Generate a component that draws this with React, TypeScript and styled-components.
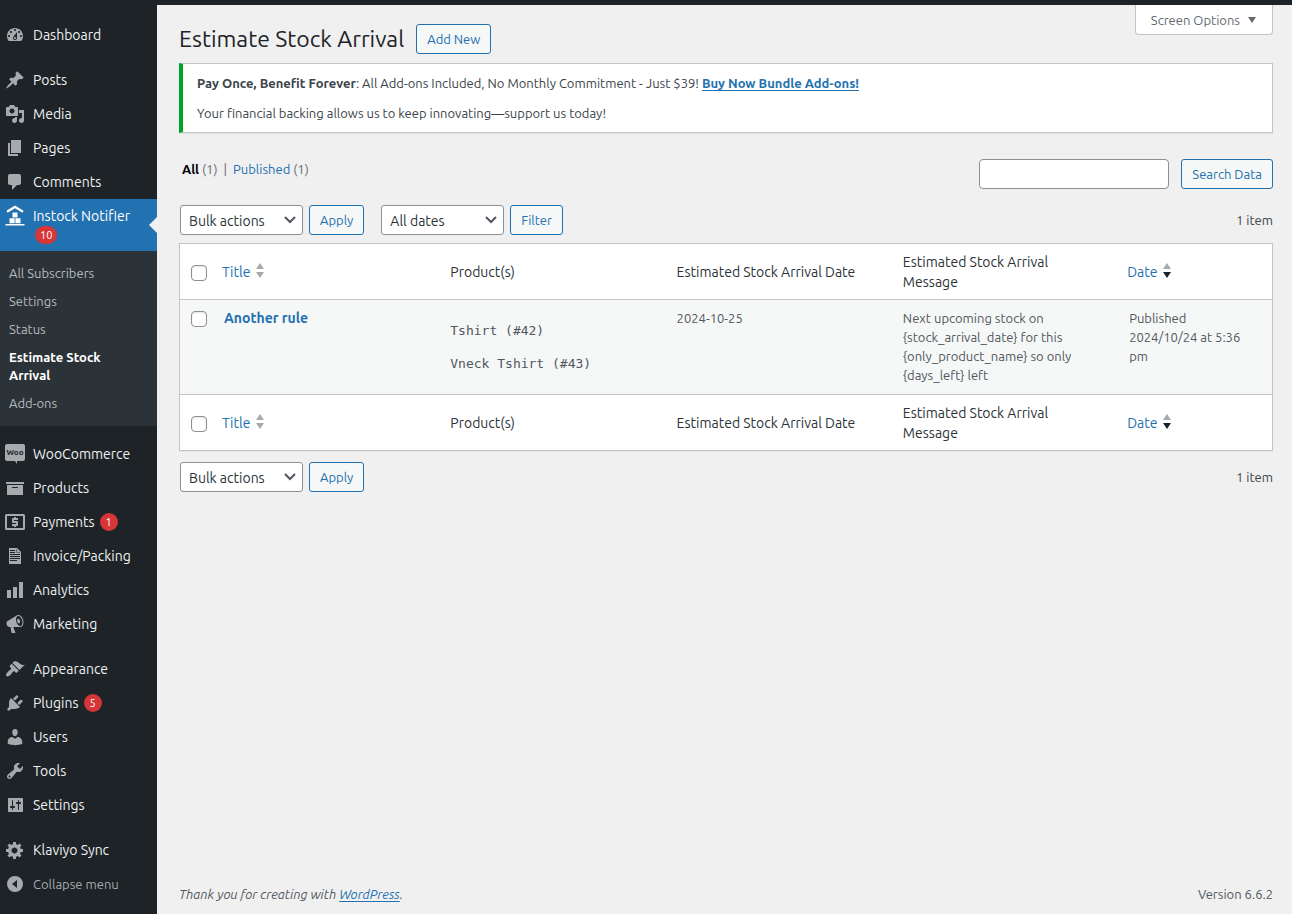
import React from "react";
import styled, { createGlobalStyle, css } from "styled-components";

const sans = `"Ubuntu", "Noto Sans", "Open Sans", sans-serif`;

const GlobalStyle = createGlobalStyle`
  *, *::before, *::after { box-sizing: border-box; }
  body {
    margin: 0;
    background: #f0f0f1;
    color: #3c434a;
    font-family: ${sans};
    font-size: 13px;
    line-height: 20px;
  }
  button, input, select { font-family: inherit; }
  p, h1, ul { margin: 0; padding: 0; }
  ul { list-style: none; }
  a { color: #2271b1; text-underline-offset: 2px; }
`;

const Page = styled.div`
  display: flex;
  min-height: 100vh;
  background: #f0f0f1;
  border-top: 5px solid #1d2327;
`;

/* ---------- Sidebar ---------- */

const Sidebar = styled.nav`
  flex: 0 0 157px;
  background: #1d2327;
  padding: 13px 0 12px;
`;

const MenuGroup = styled.ul`
  & + & { margin-top: 11px; }
`;

const MenuLink = styled.a<{ $current?: boolean }>`
  display: flex;
  position: relative;
  min-height: 34px;
  padding: 7px 0 7px 5px;
  gap: 8px;
  color: #f0f0f1;
  font-size: 14px;
  line-height: 20px;
  text-decoration: none;
  white-space: nowrap;
  ${(p) =>
    p.$current &&
    css`
      background: #2271b1;
      color: #fff;
      &::after {
        content: "";
        position: absolute;
        right: 0;
        top: 18px;
        border: 8px solid transparent;
        border-right-color: #f0f0f1;
        border-left-width: 0;
      }
    `}
`;

const MenuIcon = styled.svg<{ $bright?: boolean }>`
  flex: none;
  width: 20px;
  height: 20px;
  fill: ${(p) => (p.$bright ? "#fff" : "#a7aaad")};
`;

const MenuLabel = styled.span<{ $stacked?: boolean }>`
  display: flex;
  flex-direction: ${(p) => (p.$stacked ? "column" : "row")};
  align-items: ${(p) => (p.$stacked ? "flex-start" : "center")};
  column-gap: 5px;
`;

const Badge = styled.span<{ $indent?: boolean }>`
  min-width: 18px;
  height: 18px;
  padding: 0 5px;
  margin-left: ${(p) => (p.$indent ? "2px" : "0")};
  border-radius: 9px;
  background: #d63638;
  color: #fff;
  font-size: 11px;
  line-height: 18px;
  text-align: center;
`;

const SubMenu = styled.ul`
  background: #2c3338;
  padding: 8px 0 9px;
`;

const SubLink = styled.a<{ $current?: boolean }>`
  display: block;
  padding: 5px 30px 5px 9px;
  font-size: 13px;
  line-height: 18px;
  text-decoration: none;
  color: ${(p) => (p.$current ? "#fff" : "#b4b9be")};
  font-weight: ${(p) => (p.$current ? 600 : 400)};
`;

const CollapseButton = styled.button`
  display: flex;
  align-items: center;
  gap: 8px;
  width: 100%;
  height: 34px;
  padding: 0 0 0 5px;
  border: 0;
  background: none;
  color: #a7aaad;
  font-size: 13px;
`;

/* ---------- Content ---------- */

const Content = styled.main`
  flex: 1;
  min-width: 0;
  display: flex;
  flex-direction: column;
  padding: 0 19px 10px 22px;
`;

const Header = styled.header`
  display: flex;
  justify-content: space-between;
  align-items: flex-start;
`;

const TitleGroup = styled.div`
  display: flex;
  align-items: center;
  gap: 12px;
  padding: 19px 0 9px;
`;

const Title = styled.h1`
  font-size: 23px;
  font-weight: 400;
  line-height: 30px;
  color: #1d2327;
`;

const ScreenOptions = styled.button`
  display: flex;
  align-items: center;
  gap: 8px;
  height: 30px;
  padding: 0 16px 0 15px;
  border: 1px solid #c3c4c7;
  border-top: 0;
  border-radius: 0 0 4px 4px;
  background: #fff;
  color: #646970;
  font-size: 13px;
`;

const buttonLook = css`
  height: 30px;
  padding: 0 10px;
  border: 1px solid #2271b1;
  border-radius: 3px;
  background: #f6f7f7;
  color: #2271b1;
  font-size: 13px;
  line-height: 28px;
  white-space: nowrap;
`;

const Button = styled.button`
  ${buttonLook}
`;

const ButtonLink = styled.a`
  ${buttonLook}
  text-decoration: none;
`;

const Notice = styled.section`
  display: flex;
  flex-direction: column;
  gap: 10px;
  padding: 9px 14px;
  background: #fff;
  border: 1px solid #c3c4c7;
  border-left: 4px solid #00a32a;
  box-shadow: 0 1px 1px rgba(0, 0, 0, 0.04);
  a { font-weight: 700; }
`;

const FilterBar = styled.div`
  display: flex;
  justify-content: space-between;
  align-items: flex-start;
  margin: 26px 0 16px;
`;

const Views = styled.ul`
  display: flex;
  gap: 6px;
  padding-left: 3px;
  color: #646970;
  a { text-decoration: none; }
  a[aria-current] { color: #000; font-weight: 600; }
`;

const SearchForm = styled.form`
  display: flex;
  gap: 12px;
`;

const SearchInput = styled.input`
  width: 190px;
  height: 30px;
  padding: 0 8px;
  border: 1px solid #8c8f94;
  border-radius: 4px;
  background: #fff;
  font-size: 14px;
`;

const Toolbar = styled.div`
  display: flex;
  align-items: center;
  gap: 17px;
  padding-left: 1px;
`;

const Actions = styled.div`
  display: flex;
  gap: 6px;
`;

const SelectWrap = styled.span`
  display: grid;
  align-items: center;
  width: 123px;
  & > * { grid-area: 1 / 1; }
  svg { justify-self: end; margin-right: 7px; pointer-events: none; }
`;

const Select = styled.select`
  appearance: none;
  width: 100%;
  height: 30px;
  padding: 2px 24px 0 8px;
  border: 1px solid #8c8f94;
  border-radius: 3px;
  background: #fff;
  color: #2c3338;
  font-size: 14px;
`;

const ItemCount = styled.span`
  margin-left: auto;
`;

const Table = styled.table`
  width: 100%;
  margin: 8px 0 11px;
  table-layout: fixed;
  border-collapse: separate;
  border-spacing: 0;
  border: 1px solid #c3c4c7;
  background: #fff;
  box-shadow: 0 1px 1px rgba(0, 0, 0, 0.04);
`;

const CheckColumn = styled.col`
  width: 34px;
`;

const DateColumn = styled.col`
  width: 14%;
`;

const HeadCell = styled.th<{ $sortable?: boolean }>`
  height: 56px;
  padding: 0 24px 0 ${(p) => (p.$sortable ? "8px" : "10px")};
  color: #2c3338;
  font-size: 14px;
  font-weight: 400;
  line-height: 20px;
  text-align: left;
  vertical-align: middle;
  thead & { border-bottom: 1px solid #c3c4c7; }
  tfoot & { border-top: 1px solid #c3c4c7; }
`;

const BodyCell = styled.td`
  height: 94px;
  padding: 9px 10px;
  background: #f6f7f7;
  color: #50575e;
  line-height: 19px;
  vertical-align: top;
`;

const HeadCheckCell = styled.td`
  padding: 3px 0 0 11px;
  vertical-align: middle;
  thead & { border-bottom: 1px solid #c3c4c7; }
  tfoot & { border-top: 1px solid #c3c4c7; }
`;

const BodyCheckCell = styled.td`
  padding: 11px 0 0 11px;
  background: #f6f7f7;
  vertical-align: top;
`;

const CheckBox = styled.input`
  appearance: none;
  display: block;
  width: 16px;
  height: 16px;
  margin: 0;
  border: 1px solid #8c8f94;
  border-radius: 4px;
  background: #fff;
  box-shadow: inset 0 1px 2px rgba(0, 0, 0, 0.1);
`;

const SortLink = styled.a`
  display: inline-flex;
  align-items: center;
  gap: 6px;
  text-decoration: none;
  svg { margin-top: -3px; }
`;

const RowTitle = styled.a`
  font-size: 14px;
  font-weight: 600;
  text-decoration: none;
`;

const Product = styled.p`
  font-family: "DejaVu Sans Mono", monospace;
  font-size: 13px;
  line-height: 20px;
  padding-top: 13px;
  &:first-child { padding-top: 12px; }
`;

const Footer = styled.footer`
  display: flex;
  justify-content: space-between;
  margin-top: auto;
  color: #50575e;
`;

/* ---------- Icons ---------- */

const icons: Record<string, string> = {
  dashboard:
    "M3.76 16h12.48c1.1-1.37 1.76-3.11 1.76-5 0-4.42-3.58-8-8-8s-8 3.58-8 8c0 1.89.66 3.63 1.76 5zM10 4c.55 0 1 .45 1 1s-.45 1-1 1-1-.45-1-1 .45-1 1-1zM6 6c.55 0 1 .45 1 1s-.45 1-1 1-1-.45-1-1 .45-1 1-1zm8 0c.55 0 1 .45 1 1s-.45 1-1 1-1-.45-1-1 .45-1 1-1zm-5.37 5.55L12 7v6c0 1.1-.9 2-2 2s-2-.9-2-2c0-.57.24-1.08.63-1.45zM4 10c.55 0 1 .45 1 1s-.45 1-1 1-1-.45-1-1 .45-1 1-1zm12 0c.55 0 1 .45 1 1s-.45 1-1 1-1-.45-1-1 .45-1 1-1zm-5 3c0-.55-.45-1-1-1s-1 .45-1 1 .45 1 1 1 1-.45 1-1z",
  posts:
    "M10.44 3.02l1.82-1.82 6.36 6.35-1.83 1.82c-1.05-.68-2.48-.57-3.41.36l-.75.75c-.92.93-1.04 2.35-.35 3.41l-1.83 1.82-2.41-2.41-2.8 2.79c-.42.42-3.38 2.71-3.8 2.29s1.86-3.39 2.28-3.81l2.79-2.79L4.1 9.36l1.83-1.82c1.05.69 2.48.57 3.4-.36l.75-.75c.93-.92 1.05-2.35.36-3.41z",
  media:
    "M13 11V4c0-.55-.45-1-1-1h-1.67L9 1H5L3.67 3H2c-.55 0-1 .45-1 1v7c0 .55.45 1 1 1h10c.55 0 1-.45 1-1zM7 4.5c1.38 0 2.5 1.12 2.5 2.5S8.38 9.5 7 9.5 4.5 8.38 4.5 7 5.62 4.5 7 4.5zM14 6h5v10.5c0 1.38-1.12 2.5-2.5 2.5S14 17.88 14 16.5s1.12-2.5 2.5-2.5c.17 0 .34.02.5.05V9h-3V6zm-4 8.05V13h2v3.5c0 1.38-1.12 2.5-2.5 2.5S7 17.88 7 16.5 8.12 14 9.5 14c.17 0 .34.02.5.05z",
  pages: "M6 15V2h10v13H6zm-1 1h8v2H3V5h2v11z",
  comments: "M5 2h9c1.1 0 2 .9 2 2v7c0 1.1-.9 2-2 2h-2l-5 5v-5H5c-1.1 0-2-.9-2-2V4c0-1.1.9-2 2-2z",
  instock:
    "M10-.5L18.6 4.8 17.4 6.8 10 2.2 2.6 6.8 1.4 4.800zM7.500 6.500h5v5h-5zM4.500 12.300h5.100v5H4.500zM10.400 12.300h5.100v5h-5.100zM.5 18h19v1.600H.5z",
  products: "M19 4v2H1V4h18zM2 7h16v10H2V7zm11 3V9H7v1h6z",
  payments:
    "M1.5 2h17A1.5 1.5 0 0 1 20 3.5v13a1.5 1.5 0 0 1-1.5 1.5h-17A1.5 1.5 0 0 1 0 16.5v-13A1.5 1.5 0 0 1 1.5 2zM2 4v12h16V4zM9 5h2v1h2v2H9v1h3a1 1 0 0 1 1 1v3a1 1 0 0 1-1 1h-1v1H9v-1H7v-2h4v-1H8a1 1 0 0 1-1-1V7a1 1 0 0 1 1-1h1z",
  invoice:
    "M4 2h8l4 4v12H4zM5 4v1h5V4zM5 6v1h5V6zM5 8v1h10V8zM5 10v1h10v-1zM5 12v1h10v-1zM5 14v1h7v-1zM11.500 3v3.500H15V6h-3V3z",
  analytics: "M18 18V2h-4v16h4zm-6 0V7H8v11h4zm-6 0v-8H2v8h4z",
  marketing:
    "M18.15 5.94c.46 1.62.38 3.22-.02 4.48-.42 1.28-1.26 2.18-2.3 2.48-.16.06-.26.06-.4.06-.06.02-.12.02-.18.02-.06.02-.14.02-.22.02h-6.8l2.22 5.5c.02.14-.06.26-.14.34-.08.1-.24.16-.34.16H6.95c-.1 0-.26-.06-.34-.16-.08-.08-.16-.2-.14-.34l-1-5.5H4.25l-.02-.02c-.5.06-1.08-.18-1.54-.62s-.88-1.08-1.06-1.88c-.24-.8-.2-1.56-.02-2.2.18-.62.58-1.08 1.06-1.3l.02-.02 9-5.4c.1-.06.18-.1.24-.16.06-.04.14-.08.24-.12.16-.08.28-.12.5-.18 1.04-.3 2.24.1 3.22.98s1.84 2.24 2.26 3.86zm-2.58 5.98h-.02c.4-.1.74-.34 1.04-.7.58-.7.86-1.76.86-3.04 0-.64-.1-1.3-.28-1.98-.34-1.36-1.02-2.5-1.78-3.24s-1.68-1.1-2.46-.88c-.82.22-1.4.96-1.7 2-.32 1.04-.28 2.36.06 3.72.38 1.36 1 2.5 1.8 3.24.78.74 1.62 1.1 2.48.88zm-2.54-7.08c.22-.04.42-.02.62.04.38.16.76.48 1.02 1s.42 1.2.42 1.78c0 .3-.04.56-.12.8-.18.48-.44.84-.86.94-.34.1-.8-.06-1.14-.4s-.64-.86-.78-1.5c-.18-.62-.12-1.24.02-1.72s.48-.84.82-.94z",
  appearance:
    "M14.48 11.06L7.41 3.99l1.5-1.5c.5-.56 2.3-.47 3.51.32 1.21.8 1.43 1.28 2.91 2.1 1.18.64 2.45 1.26 4.45.85zm-.71.71L6.7 4.7 4.93 6.47c-.39.39-.39 1.02 0 1.41l1.06 1.06c.39.39.39 1.03 0 1.42-.6.6-1.43 1.11-2.21 1.69-.35.26-.7.53-1.01.84C1.43 14.23.4 16.08 1.4 17.07c.99 1 2.84-.03 4.18-1.36.31-.31.58-.66.85-1.02.57-.78 1.08-1.61 1.69-2.21.39-.39 1.02-.39 1.41 0l1.06 1.06c.39.39 1.02.39 1.41 0z",
  plugins:
    "M13.11 4.36L9.87 7.6 8 5.73l3.24-3.24c.35-.34 1.05-.2 1.56.32.52.51.66 1.21.31 1.55zm-8 1.77l.91-1.12 9.01 9.01-1.19.84c-.71.71-2.63 1.16-3.82 1.16H6.14L4.9 17.26c-.59.59-1.54.59-2.12 0-.59-.58-.59-1.53 0-2.12l1.24-1.24v-3.88c0-1.13.4-3.19 1.09-3.89zm7.26 3.97l3.24-3.24c.34-.35 1.04-.21 1.55.31.52.51.66 1.21.31 1.55l-3.24 3.25z",
  users:
    "M10 9.25c-2.27 0-2.73-3.44-2.73-3.44C7 4.02 7.82 2 9.97 2c2.16 0 2.98 2.02 2.71 3.81 0 0-.41 3.44-2.68 3.44zm0 2.57L12.72 10c2.39 0 4.52 2.33 4.52 4.53v2.49s-3.65 1.13-7.24 1.13c-3.65 0-7.24-1.13-7.24-1.13v-2.49c0-2.25 1.94-4.48 4.47-4.48z",
  tools:
    "M16.68 9.77c-1.34 1.34-3.3 1.67-4.95.99l-5.41 6.52c-.99.99-2.59.99-3.58 0s-.99-2.59 0-3.57l6.52-5.42c-.68-1.65-.35-3.61.99-4.95 1.28-1.28 3.12-1.62 4.72-1.06l-2.89 2.89 2.82 2.82 2.86-2.87c.53 1.58.18 3.39-1.08 4.65zM3.81 16.21c.4.39 1.04.39 1.43 0 .4-.4.4-1.04 0-1.43-.39-.4-1.03-.4-1.43 0-.39.39-.39 1.03 0 1.43z",
  settings:
    "M18 16V4c0-.6-.4-1-1-1H4c-.6 0-1 .4-1 1v12c0 .6.4 1 1 1h13c.6 0 1-.4 1-1zM8 11h1c.55 0 1 .45 1 1s-.45 1-1 1H8v1.5c0 .28-.22.5-.5.5s-.5-.22-.5-.5V13H6c-.55 0-1-.45-1-1s.45-1 1-1h1V5.5c0-.28.22-.5.5-.5s.5.22.5.5V11zm5-2h-1c-.55 0-1-.45-1-1s.45-1 1-1h1V5.5c0-.28.22-.5.5-.5s.5.22.5.5V7h1c.55 0 1 .45 1 1s-.45 1-1 1h-1v5.5c0 .28-.22.5-.5.5s-.5-.22-.5-.5V9z",
  gear:
    "M18 12h-2.18c-.17.7-.44 1.35-.81 1.93l1.54 1.54-2.1 2.1-1.54-1.54c-.58.36-1.23.63-1.91.79V19H8v-2.18c-.68-.16-1.33-.43-1.91-.79l-1.54 1.54-2.12-2.12 1.54-1.54c-.36-.58-.63-1.23-.79-1.91H1V9.03h2.17c.16-.7.44-1.35.8-1.94L2.43 5.55l2.1-2.1 1.54 1.54c.58-.37 1.24-.64 1.93-.81V2h3v2.18c.68.16 1.33.43 1.91.79l1.54-1.54 2.12 2.12-1.54 1.54c.36.59.64 1.24.8 1.94H18V12zm-8.5 1.5c1.66 0 3-1.34 3-3s-1.34-3-3-3-3 1.34-3 3 1.34 3 3 3z",
  collapse: "M10 2a8 8 0 1 1 0 16a8 8 0 0 1 0-16zM12 6l-5 4 5 4z",
};

function Icon({ name, bright }: { name: string; bright?: boolean }) {
  return (
    <MenuIcon viewBox="0 0 20 20" aria-hidden="true" overflow="visible" $bright={bright}>
      {name === "woo" ? (
        <>
          <path d="M2 0h16a2 2 0 0 1 2 2v13a2 2 0 0 1-2 2h-6v3l-2-3H2a2 2 0 0 1-2-2V2a2 2 0 0 1 2-2z" />
          <text x="10" y="11" textAnchor="middle" fontSize="8" fontWeight="700" fill="#1d2327">
            Woo
          </text>
        </>
      ) : (
        <path fillRule="evenodd" d={icons[name]} />
      )}
    </MenuIcon>
  );
}

function SortArrows({ descending }: { descending?: boolean }) {
  return (
    <svg width="8" height="15" viewBox="0 0 8 15" aria-hidden="true">
      <path d="M4 0l4 6H0z" fill="#a7aaad" />
      <path d="M0 9h8l-4 6z" fill={descending ? "#1d2327" : "#a7aaad"} />
    </svg>
  );
}

/* ---------- Data ---------- */

type Item = { icon: string; label: string; count?: number; current?: boolean };

const menuGroups: Item[][] = [
  [{ icon: "dashboard", label: "Dashboard" }],
  [
    { icon: "posts", label: "Posts" },
    { icon: "media", label: "Media" },
    { icon: "pages", label: "Pages" },
    { icon: "comments", label: "Comments" },
    { icon: "instock", label: "Instock Notifier", count: 10, current: true },
  ],
  [
    { icon: "woo", label: "WooCommerce" },
    { icon: "products", label: "Products" },
    { icon: "payments", label: "Payments", count: 1 },
    { icon: "invoice", label: "Invoice/Packing" },
    { icon: "analytics", label: "Analytics" },
    { icon: "marketing", label: "Marketing" },
  ],
  [
    { icon: "appearance", label: "Appearance" },
    { icon: "plugins", label: "Plugins", count: 5 },
    { icon: "users", label: "Users" },
    { icon: "tools", label: "Tools" },
    { icon: "settings", label: "Settings" },
  ],
  [{ icon: "gear", label: "Klaviyo Sync" }],
];

const subItems = ["All Subscribers", "Settings", "Status", "Estimate Stock Arrival", "Add-ons"];

function HeadRow() {
  return (
    <tr>
      <HeadCheckCell>
        <CheckBox type="checkbox" aria-label="Select all" />
      </HeadCheckCell>
      <HeadCell scope="col" $sortable>
        <SortLink href="#title">
          Title <SortArrows />
        </SortLink>
      </HeadCell>
      <HeadCell scope="col">Product(s)</HeadCell>
      <HeadCell scope="col">Estimated Stock Arrival Date</HeadCell>
      <HeadCell scope="col">Estimated Stock Arrival Message</HeadCell>
      <HeadCell scope="col" $sortable>
        <SortLink href="#date">
          Date <SortArrows descending />
        </SortLink>
      </HeadCell>
    </tr>
  );
}

function Dropdown({ label, value }: { label: string; value: string }) {
  return (
    <SelectWrap>
      <Select aria-label={label} defaultValue={value}>
        <option>{value}</option>
      </Select>
      <svg width="12" height="8" viewBox="0 0 12 8" fill="none" stroke="#50575e" strokeWidth="2" aria-hidden="true">
        <path d="M1 1l5 5 5-5" />
      </svg>
    </SelectWrap>
  );
}

function BulkActions() {
  return (
    <Actions>
      <Dropdown label="Select bulk action" value="Bulk actions" />
      <Button type="button">Apply</Button>
    </Actions>
  );
}

export default function App() {
  return (
    <>
      <GlobalStyle />
      <Page>
        <Sidebar aria-label="Main menu">
          {menuGroups.map((group, i) => (
            <MenuGroup key={i}>
              {group.map((item) => (
                <li key={item.label}>
                  <MenuLink href="#" $current={item.current}>
                    <Icon name={item.icon} bright={item.current} />
                    <MenuLabel $stacked={item.current}>
                      {item.label}
                      {item.count && <Badge $indent={item.current}>{item.count}</Badge>}
                    </MenuLabel>
                  </MenuLink>
                  {item.current && (
                    <SubMenu>
                      {subItems.map((s) => (
                        <li key={s}>
                          <SubLink href="#" $current={s === "Estimate Stock Arrival"}>
                            {s}
                          </SubLink>
                        </li>
                      ))}
                    </SubMenu>
                  )}
                </li>
              ))}
            </MenuGroup>
          ))}
          <CollapseButton type="button">
            <Icon name="collapse" />
            Collapse menu
          </CollapseButton>
        </Sidebar>

        <Content>
          <Header>
            <TitleGroup>
              <Title>Estimate Stock Arrival</Title>
              <ButtonLink href="#new">Add New</ButtonLink>
            </TitleGroup>
            <ScreenOptions type="button">
              Screen Options
              <svg width="8" height="6" viewBox="0 0 8 6" fill="#646970" aria-hidden="true">
                <path d="M0 0h8L4 6z" />
              </svg>
            </ScreenOptions>
          </Header>

          <Notice>
            <p>
              <strong>Pay Once, Benefit Forever</strong>: All Add-ons Included, No Monthly Commitment - Just $39!{" "}
              <a href="#bundle">Buy Now Bundle Add-ons!</a>
            </p>
            <p>Your financial backing allows us to keep innovating—support us today!</p>
          </Notice>

          <FilterBar>
            <Views>
              <li>
                <a href="#all" aria-current="page">
                  All
                </a>{" "}
                (1)
              </li>
              <li aria-hidden="true">|</li>
              <li>
                <a href="#published">Published</a> (1)
              </li>
            </Views>
            <SearchForm>
              <SearchInput type="search" aria-label="Search Data" />
              <Button type="submit">Search Data</Button>
            </SearchForm>
          </FilterBar>

          <Toolbar>
            <BulkActions />
            <Actions>
              <Dropdown label="Filter by date" value="All dates" />
              <Button type="button">Filter</Button>
            </Actions>
            <ItemCount>1 item</ItemCount>
          </Toolbar>

          <Table>
            <colgroup>
              <CheckColumn />
              <col />
              <col />
              <col />
              <col />
              <DateColumn />
            </colgroup>
            <thead>
              <HeadRow />
            </thead>
            <tbody>
              <tr>
                <BodyCheckCell>
                  <CheckBox type="checkbox" aria-label="Select Another rule" />
                </BodyCheckCell>
                <BodyCell>
                  <RowTitle href="#rule">Another rule</RowTitle>
                </BodyCell>
                <BodyCell>
                  <Product>Tshirt (#42)</Product>
                  <Product>Vneck Tshirt (#43)</Product>
                </BodyCell>
                <BodyCell>2024-10-25</BodyCell>
                <BodyCell>
                  Next upcoming stock on {"{stock_arrival_date}"} for this {"{only_product_name}"} so only{" "}
                  {"{days_left}"} left
                </BodyCell>
                <BodyCell>
                  Published
                  <br />
                  2024/10/24 at 5:36 pm
                </BodyCell>
              </tr>
            </tbody>
            <tfoot>
              <HeadRow />
            </tfoot>
          </Table>

          <Toolbar>
            <BulkActions />
            <ItemCount>1 item</ItemCount>
          </Toolbar>

          <Footer>
            <em>
              Thank you for creating with <a href="#wordpress">WordPress</a>.
            </em>
            <span>Version 6.6.2</span>
          </Footer>
        </Content>
      </Page>
    </>
  );
}
